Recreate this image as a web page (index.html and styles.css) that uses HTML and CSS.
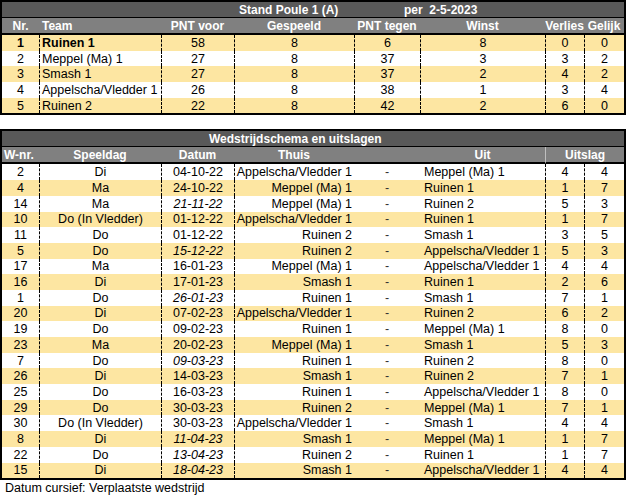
FILE: index.html
```html
<!DOCTYPE html>
<html lang="nl">
<head>
<meta charset="utf-8">
<title>Stand Poule 1 (A)</title>
<link rel="stylesheet" href="styles.css">
</head>
<body>
<table class="sheet stand">
  <colgroup>
    <col class="w-nr"><col class="w-team"><col class="w-voor"><col class="w-gesp"><col class="w-tegen"><col class="w-winst"><col class="w-verl"><col class="w-gel">
  </colgroup>
  <thead>
    <tr class="title"><th colspan="8"><div class="title-inner stand-title"><span class="t-main">Stand Poule 1 (A)</span><span>per&nbsp; 2-5-2023</span></div></th></tr>
    <tr class="head"><th>Nr.</th><th class="left">Team</th><th>PNT voor</th><th>Gespeeld</th><th>PNT tegen</th><th>Winst</th><th>Verlies</th><th>Gelijk</th></tr>
  </thead>
  <tbody>
    <tr class="alt"><td class="b">1</td><td class="dl left b">Ruinen 1</td><td class="dl">58</td><td class="dl">8</td><td class="dl">6</td><td class="dl">8</td><td class="dl">0</td><td class="dl">0</td></tr>
    <tr><td>2</td><td class="dl left">Meppel (Ma) 1</td><td class="dl">27</td><td class="dl">8</td><td class="dl">37</td><td class="dl">3</td><td class="dl">3</td><td class="dl">2</td></tr>
    <tr class="alt"><td>3</td><td class="dl left">Smash 1</td><td class="dl">27</td><td class="dl">8</td><td class="dl">37</td><td class="dl">2</td><td class="dl">4</td><td class="dl">2</td></tr>
    <tr><td>4</td><td class="dl left">Appelscha/Vledder 1</td><td class="dl">26</td><td class="dl">8</td><td class="dl">38</td><td class="dl">1</td><td class="dl">3</td><td class="dl">4</td></tr>
    <tr class="alt"><td>5</td><td class="dl left">Ruinen 2</td><td class="dl">22</td><td class="dl">8</td><td class="dl">42</td><td class="dl">2</td><td class="dl">6</td><td class="dl">0</td></tr>
  </tbody>
</table>

<table class="sheet schema">
  <colgroup>
    <col class="w-nr"><col class="w-team"><col class="w-voor"><col class="w-gesp"><col class="w-tegen"><col class="w-winst"><col class="w-verl"><col class="w-gel">
  </colgroup>
  <thead>
    <tr class="title"><th colspan="8"><div class="title-inner schema-title">Wedstrijdschema en uitslagen</div></th></tr>
    <tr class="head"><th class="left">W-nr.</th><th>Speeldag</th><th>Datum</th><th>Thuis</th><th></th><th>Uit</th><th colspan="2" class="hsep">Uitslag</th></tr>
  </thead>
  <tbody>
    <tr><td>2</td><td class="dl">Di</td><td class="dl">04-10-22</td><td class="dl thuis">Appelscha/Vledder 1</td><td class="dash">-</td><td class="uit">Meppel (Ma) 1</td><td class="dl">4</td><td class="dl">4</td></tr>
    <tr class="alt"><td>4</td><td class="dl">Ma</td><td class="dl">24-10-22</td><td class="dl thuis">Meppel (Ma) 1</td><td class="dash">-</td><td class="uit">Ruinen 1</td><td class="dl">1</td><td class="dl">7</td></tr>
    <tr><td>14</td><td class="dl">Ma</td><td class="dl i">21-11-22</td><td class="dl thuis">Meppel (Ma) 1</td><td class="dash">-</td><td class="uit">Ruinen 2</td><td class="dl">5</td><td class="dl">3</td></tr>
    <tr class="alt"><td>10</td><td class="dl">Do (In Vledder)</td><td class="dl">01-12-22</td><td class="dl thuis">Appelscha/Vledder 1</td><td class="dash">-</td><td class="uit">Ruinen 1</td><td class="dl">1</td><td class="dl">7</td></tr>
    <tr><td>11</td><td class="dl">Do</td><td class="dl">01-12-22</td><td class="dl thuis">Ruinen 2</td><td class="dash">-</td><td class="uit">Smash 1</td><td class="dl">3</td><td class="dl">5</td></tr>
    <tr class="alt"><td>5</td><td class="dl">Do</td><td class="dl i">15-12-22</td><td class="dl thuis">Ruinen 2</td><td class="dash">-</td><td class="uit">Appelscha/Vledder 1</td><td class="dl">5</td><td class="dl">3</td></tr>
    <tr><td>17</td><td class="dl">Ma</td><td class="dl">16-01-23</td><td class="dl thuis">Meppel (Ma) 1</td><td class="dash">-</td><td class="uit">Appelscha/Vledder 1</td><td class="dl">4</td><td class="dl">4</td></tr>
    <tr class="alt"><td>16</td><td class="dl">Di</td><td class="dl">17-01-23</td><td class="dl thuis">Smash 1</td><td class="dash">-</td><td class="uit">Ruinen 1</td><td class="dl">2</td><td class="dl">6</td></tr>
    <tr><td>1</td><td class="dl">Do</td><td class="dl i">26-01-23</td><td class="dl thuis">Ruinen 1</td><td class="dash">-</td><td class="uit">Smash 1</td><td class="dl">7</td><td class="dl">1</td></tr>
    <tr class="alt"><td>20</td><td class="dl">Di</td><td class="dl">07-02-23</td><td class="dl thuis">Appelscha/Vledder 1</td><td class="dash">-</td><td class="uit">Ruinen 2</td><td class="dl">6</td><td class="dl">2</td></tr>
    <tr><td>19</td><td class="dl">Do</td><td class="dl">09-02-23</td><td class="dl thuis">Ruinen 1</td><td class="dash">-</td><td class="uit">Meppel (Ma) 1</td><td class="dl">8</td><td class="dl">0</td></tr>
    <tr class="alt"><td>23</td><td class="dl">Ma</td><td class="dl">20-02-23</td><td class="dl thuis">Meppel (Ma) 1</td><td class="dash">-</td><td class="uit">Smash 1</td><td class="dl">5</td><td class="dl">3</td></tr>
    <tr><td>7</td><td class="dl">Do</td><td class="dl i">09-03-23</td><td class="dl thuis">Ruinen 1</td><td class="dash">-</td><td class="uit">Ruinen 2</td><td class="dl">8</td><td class="dl">0</td></tr>
    <tr class="alt"><td>26</td><td class="dl">Di</td><td class="dl">14-03-23</td><td class="dl thuis">Smash 1</td><td class="dash">-</td><td class="uit">Ruinen 2</td><td class="dl">7</td><td class="dl">1</td></tr>
    <tr><td>25</td><td class="dl">Do</td><td class="dl">16-03-23</td><td class="dl thuis">Ruinen 1</td><td class="dash">-</td><td class="uit">Appelscha/Vledder 1</td><td class="dl">8</td><td class="dl">0</td></tr>
    <tr class="alt"><td>29</td><td class="dl">Do</td><td class="dl">30-03-23</td><td class="dl thuis">Ruinen 2</td><td class="dash">-</td><td class="uit">Meppel (Ma) 1</td><td class="dl">7</td><td class="dl">1</td></tr>
    <tr><td>30</td><td class="dl">Do (In Vledder)</td><td class="dl">30-03-23</td><td class="dl thuis">Appelscha/Vledder 1</td><td class="dash">-</td><td class="uit">Smash 1</td><td class="dl">4</td><td class="dl">4</td></tr>
    <tr class="alt"><td>8</td><td class="dl">Di</td><td class="dl i">11-04-23</td><td class="dl thuis">Smash 1</td><td class="dash">-</td><td class="uit">Meppel (Ma) 1</td><td class="dl">1</td><td class="dl">7</td></tr>
    <tr><td>22</td><td class="dl">Do</td><td class="dl i">13-04-23</td><td class="dl thuis">Ruinen 2</td><td class="dash">-</td><td class="uit">Ruinen 1</td><td class="dl">1</td><td class="dl">7</td></tr>
    <tr class="alt"><td>15</td><td class="dl">Di</td><td class="dl i">18-04-23</td><td class="dl thuis">Smash 1</td><td class="dash">-</td><td class="uit">Appelscha/Vledder 1</td><td class="dl">4</td><td class="dl">4</td></tr>
  </tbody>
</table>
<p class="note">Datum cursief: Verplaatste wedstrijd</p>
</body>
</html>
```

FILE: styles.css
```css
* { box-sizing: border-box; }

body {
  margin: 0;
  background: #ffffff;
  font-family: "Liberation Sans", Arial, sans-serif;
  font-size: 12px;
  color: #000000;
}

.sheet {
  border-collapse: separate;
  border-spacing: 0;
  table-layout: fixed;
  width: 626px;
  border: 2px solid #000000;
}

.schema { margin-top: 14px; }

.w-nr { width: 37px; }
.w-team { width: 122px; }
.w-voor { width: 73px; }
.w-gesp { width: 120px; }
.w-tegen { width: 66px; }
.w-winst { width: 125px; }
.w-verl { width: 39px; }
.w-gel { width: 40px; }

.sheet th,
.sheet td {
  padding: 0;
  line-height: 14px;
  white-space: nowrap;
  overflow: hidden;
  text-align: center;
  font-weight: normal;
}

.sheet td { font-size: 12.5px; }

.title { height: 16px; }
.title th {
  background: #595959;
  color: #ffffff;
  font-weight: bold;
  text-align: left;
  border-bottom: 1px solid #000000;
}

.title-inner { display: flex; }
.stand-title { padding-left: 237px; }
.t-main { width: 165px; }
.schema-title { padding-left: 207px; }

.head { height: 17px; }
.head th {
  background: #808080;
  color: #ffffff;
  font-weight: bold;
  border-bottom: 2px solid #000000;
}
.head th.left { text-align: left; padding-left: 2px; }
.stand .head th.left { padding-left: 3px; }
.head th.hsep { border-left: 1px solid #bfbfbf; }

tbody tr { height: 15.7px; background: #ffffff; }
tbody tr.alt { background: #fde6a2; }

td.dl { border-left: 1px dashed #000000; }
td.left { text-align: left; padding-left: 2px; }
td.b { font-weight: bold; }
td.i { font-style: italic; }
td.thuis { text-align: right; padding-right: 2px; }
td.dash { color: #333333; }
td.uit { text-align: left; padding-left: 4px; }

.note {
  margin: 0;
  padding-left: 5px;
  line-height: 16px;
  font-size: 12.5px;
}
```
